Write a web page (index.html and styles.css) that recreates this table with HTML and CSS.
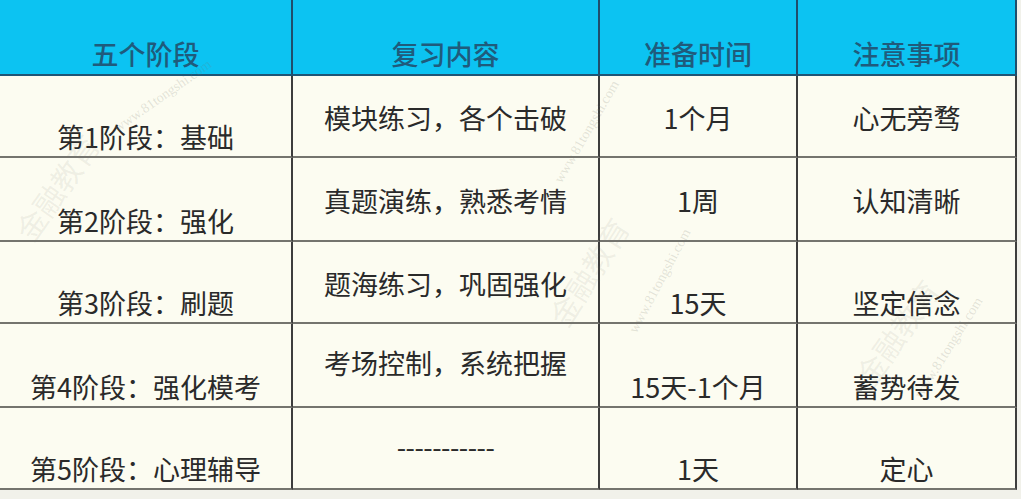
FILE: index.html
```html
<!DOCTYPE html>
<html lang="zh-CN">
<head>
<meta charset="utf-8">
<title>五个阶段复习计划</title>
<link rel="stylesheet" href="styles.css">
</head>
<body>
<div class="sheet">
  <div class="table">
    <div class="cell head">五个阶段</div>
    <div class="cell head">复习内容</div>
    <div class="cell head">准备时间</div>
    <div class="cell head">注意事项</div>

    <div class="cell low">第1阶段：基础</div>
    <div class="cell mid">模块练习，各个击破</div>
    <div class="cell mid">1个月</div>
    <div class="cell mid">心无旁骛</div>

    <div class="cell low">第2阶段：强化</div>
    <div class="cell mid">真题演练，熟悉考情</div>
    <div class="cell mid">1周</div>
    <div class="cell mid">认知清晰</div>

    <div class="cell low">第3阶段：刷题</div>
    <div class="cell mid">题海练习，巩固强化</div>
    <div class="cell low">15天</div>
    <div class="cell low">坚定信念</div>

    <div class="cell low">第4阶段：强化模考</div>
    <div class="cell mid up">考场控制，系统把握</div>
    <div class="cell low">15天-1个月</div>
    <div class="cell low">蓄势待发</div>

    <div class="cell low">第5阶段：心理辅导</div>
    <div class="cell mid dash">-----------</div>
    <div class="cell low">1天</div>
    <div class="cell low">定心</div>
  </div>

  <span class="mark m1">www.81tongshi.com</span>
  <span class="mark m2">www.81tongshi.com</span>
  <span class="mark m3">www.81tongshi.com</span>
  <span class="mark m4">www.81tongshi.com</span>
  <span class="mark big b1">金融教育</span>
  <span class="mark big b2">金融教育</span>
  <span class="mark big b3">金融教育</span>
</div>
</body>
</html>
```

FILE: styles.css
```css
html, body {
  margin: 0;
  padding: 0;
  background: #f1f1ea;
}

.sheet {
  position: relative;
  width: 1021px;
  height: 499px;
  overflow: hidden;
  background: #f1f1ea;
}

.table {
  display: grid;
  grid-template-columns: 293px 307px 198px 219px;
  grid-template-rows: 76px 82px 84px 82px 84px 82px;
  width: 1017px;
  background: #fcfcf1;
  font-family: "Noto Sans CJK SC", "Noto Sans", sans-serif;
  font-size: 27px;
  line-height: 32px;
  color: #2a2a2a;
}

.cell {
  box-sizing: border-box;
  display: flex;
  justify-content: center;
  border-right: 2px solid #3d3d3d;
  border-bottom: 2px solid #74746e;
  white-space: nowrap;
}

.head {
  background: #0cc3f2;
  color: #1f5b7c;
  font-weight: 500;
  align-items: flex-end;
  padding-bottom: 4px;
  border-right-color: #1f4e6c;
  border-bottom-color: #1f5575;
}

.low {
  align-items: flex-end;
  padding-bottom: 3px;
}

.mid {
  align-items: center;
  padding-top: 4px;
}

.mid.up {
  padding-top: 0;
  padding-bottom: 4px;
}

.dash {
  letter-spacing: -0.5px;
  padding-top: 0;
  padding-bottom: 2px;
}

.mark {
  position: absolute;
  font-family: "Liberation Serif", serif;
  font-size: 14px;
  color: rgba(120, 120, 110, 0.2);
  white-space: nowrap;
  transform-origin: left bottom;
  pointer-events: none;
}

.m1 { left: 120px; top: 120px; transform: rotate(-35deg); }
.m2 { left: 565px; top: 170px; transform: rotate(-60deg); }
.m3 { left: 640px; top: 320px; transform: rotate(-62deg); }
.m4 { left: 925px; top: 385px; transform: rotate(-58deg); }

.big {
  font-family: "Noto Sans CJK SC", serif;
  font-size: 30px;
  color: rgba(120, 120, 110, 0.1);
}

.b1 { left: 40px; top: 205px; transform: rotate(-55deg); }
.b2 { left: 575px; top: 290px; transform: rotate(-58deg); }
.b3 { left: 880px; top: 350px; transform: rotate(-55deg); }
```
